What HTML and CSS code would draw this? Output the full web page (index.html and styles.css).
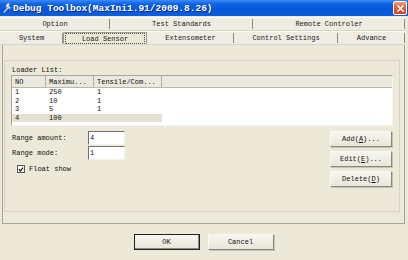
FILE: index.html
```html
<!DOCTYPE html>
<html>
<head>
<meta charset="utf-8">
<link rel="stylesheet" href="styles.css">
</head>
<body>
<div class="window">
  <div class="titlebar">
    <svg class="appicon" width="11" height="12" viewBox="0 0 11 12">
      <path d="M7.5 1 a3 3 0 1 0 2.2 4.3 l-1.6 0.2 l-1.2-1.4 l0.6-1.7 z" fill="#e8eef8" stroke="#6c7c94" stroke-width="0.6"/>
      <path d="M5.4 5.2 L1.2 10 L2.3 11 L6.6 6.4 z" fill="#d9dfe8" stroke="#5a6a84" stroke-width="0.6"/>
    </svg>
    <span class="title">Debug Toolbox(MaxIni1.91/2009.8.26)</span>
    <div class="close"><svg width="9" height="9" viewBox="0 0 9 9"><path d="M1.5 1.5 L7.5 7.5 M7.5 1.5 L1.5 7.5" stroke="#fff" stroke-width="1.7"/></svg></div>
  </div>

  <div class="tabs">
    <div class="tabrow">
      <div class="tab w110">Option</div>
      <div class="tab w143">Test Standards</div>
      <div class="tab wrest">Remote Controler</div>
    </div>
    <div class="tabrow">
      <div class="tab w63">System</div>
      <div class="tab w84 active"><span class="focus">Load Sensor</span></div>
      <div class="tab w87">Extensometer</div>
      <div class="tab w104">Control Settings</div>
      <div class="tab wrest">Advance</div>
    </div>
  </div>

  <div class="panel">
    <div class="group">
      <div class="label">Loader List:</div>
      <div class="listview">
        <div class="lvhead">
          <div class="hc c1">NO</div>
          <div class="hc c2">Maximu...</div>
          <div class="hc c3">Tensile/Com...</div>
          <div class="hc c4"></div>
        </div>
        <div class="lvrow"><div class="c1">1</div><div class="c2">250</div><div class="c3">1</div></div>
        <div class="lvrow"><div class="c1">2</div><div class="c2">10</div><div class="c3">1</div></div>
        <div class="lvrow"><div class="c1">3</div><div class="c2">5</div><div class="c3">1</div></div>
        <div class="lvrow sel"><div class="c1">4</div><div class="c2">100</div><div class="c3"></div></div>
      </div>
      <div class="lower">
        <div class="fields">
          <div class="field"><span class="flabel">Range amount:</span><span class="input">4</span></div>
          <div class="field"><span class="flabel">Range mode:</span><span class="input">1</span></div>
          <div class="check">
            <span class="box"><svg width="7" height="7" viewBox="0 0 7 7"><path d="M1 3.2 L2.8 5.2 L6 1.2" fill="none" stroke="#222" stroke-width="1.4"/></svg></span>
            <span>Float show</span>
          </div>
        </div>
        <div class="actions">
          <div class="btn">Add(<u>A</u>)...</div>
          <div class="btn">Edit(<u>E</u>)...</div>
          <div class="btn">Delete(<u>D</u>)</div>
        </div>
      </div>
    </div>
  </div>

  <div class="footer">
    <div class="btn big default">OK</div>
    <div class="btn big">Cancel</div>
  </div>
</div>
</body>
</html>
```

FILE: styles.css
```css
* { box-sizing: border-box; }
html, body {
  margin: 0;
  padding: 0;
  width: 408px;
  height: 260px;
  overflow: hidden;
  background: #ece9d8;
}
.window {
  width: 408px;
  height: 260px;
  display: flex;
  flex-direction: column;
  font-family: "Liberation Mono", "DejaVu Sans Mono", monospace;
  font-size: 7px;
  color: #111;
}
.titlebar {
  height: 16px;
  display: flex;
  align-items: center;
  background: linear-gradient(#3a8cf7 0%, #0f63e6 25%, #0756d8 60%, #0a5ee2 100%);
  padding-left: 2px;
}
.appicon { flex: none; }
.title {
  color: #fff;
  font-weight: bold;
  font-size: 9.5px;
  text-shadow: 1px 1px 0 #0a2a80;
}
.close {
  margin-left: auto;
  margin-right: 1px;
  width: 14px;
  height: 14px;
  border: 1px solid #fff;
  border-radius: 2px;
  background: linear-gradient(#f0a080, #e25c32 45%, #d9481e);
  display: flex;
  align-items: center;
  justify-content: center;
}
.tabs {
  margin-top: 1px;
  display: flex;
  flex-direction: column;
}
.tabrow {
  display: flex;
  height: 14px;
  width: 405px;
  background: #efede3;
  border-top: 1px solid #faf9f4;
  border-bottom: 1px solid #d8d5c6;
}
.tab {
  display: flex;
  align-items: center;
  justify-content: center;
  position: relative;
  height: 100%;
  color: #1a1a1a;
}
.tab::after {
  content: "";
  position: absolute;
  right: 0;
  top: 1px;
  bottom: 1px;
  width: 1px;
  background: #8e8c82;
}
.w110 { width: 110px; }
.w143 { width: 143px; }
.w63 { width: 63px; }
.w84 { width: 84px; }
.w87 { width: 87px; }
.w104 { width: 104px; }
.wrest { flex: 1; }
.tab.active {
  background: #ebe8d8;
  border: 1px solid #a09f95;
  border-bottom: none;
}
.tab.active::after { display: none; }
.focus {
  border: 1px dotted #555;
  height: 11px;
  width: 80px;
  display: flex;
  align-items: center;
  justify-content: center;
}
.panel {
  margin-left: 2px;
  width: 403px;
  height: 179px;
  border: 1px solid #a5a398;
  border-top: none;
  background: #ece9d8;
  padding: 15px 5px 11px 1px;
  display: flex;
}
.group {
  flex: 1;
  border: 1px solid #d6d3c5;
  padding: 4px 6px 0 6px;
  display: flex;
  flex-direction: column;
}
.label {
  height: 10px;
  line-height: 10px;
  margin-left: 1px;
}
.listview {
  width: 382px;
  height: 51px;
  background: #fff;
  border: 1px solid #a7a6a0;
  border-right-color: #f4f3ee;
  border-bottom-color: #f4f3ee;
}
.lvhead {
  display: flex;
  height: 12px;
  background: #ebe9dd;
  border-bottom: 1px solid #b9b7ab;
}
.hc {
  display: flex;
  align-items: center;
  border-right: 1px solid #b5b3a8;
  height: 100%;
}
.c1 { width: 34px; padding-left: 3px; }
.c2 { width: 48px; padding-left: 3px; }
.c3 { width: 68px; padding-left: 3px; }
.c4 { flex: 1; border-right: none; }
.lvrow {
  display: flex;
  height: 8.5px;
  line-height: 8.5px;
  width: 150px;
}
.lvrow.sel { background: #e4e1d3; }
.lower {
  display: flex;
  justify-content: space-between;
  margin-top: 5px;
}
.fields {
  display: flex;
  flex-direction: column;
  gap: 1px;
}
.field {
  display: flex;
  align-items: center;
  height: 14px;
}
.flabel {
  width: 76px;
  margin-left: 1px;
}
.input {
  width: 37px;
  height: 14px;
  background: #fff;
  border: 1px solid #f2f1ea;
  border-left: 1px solid #707070;
  border-top: 1px solid #707070;
  padding-left: 1px;
  line-height: 12px;
}
.check {
  display: flex;
  align-items: center;
  margin-top: 4px;
  margin-left: 6px;
  gap: 4px;
}
.box {
  width: 8px;
  height: 8px;
  background: #fff;
  border: 1px solid #555;
  display: flex;
  align-items: center;
  justify-content: center;
}
.actions {
  display: flex;
  flex-direction: column;
  gap: 4px;
  margin-right: 1px;
}
.btn {
  width: 62px;
  height: 16px;
  display: flex;
  align-items: center;
  justify-content: center;
  background: linear-gradient(#f6f5ef, #e9e6d8);
  border: 1px solid #f9f8f3;
  border-right-color: #8a897f;
  border-bottom-color: #8a897f;
  box-shadow: 1px 1px 0 #c5c3b6;
}
.footer {
  display: flex;
  justify-content: center;
  gap: 8px;
  margin-top: 10px;
  margin-left: -1px;
}
.btn.big {
  width: 66px;
  height: 16px;
}
.btn.default {
  border: 1px solid #222;
  box-shadow: inset -1px -1px 0 #8a897f;
}
u { text-decoration: underline; }
```
